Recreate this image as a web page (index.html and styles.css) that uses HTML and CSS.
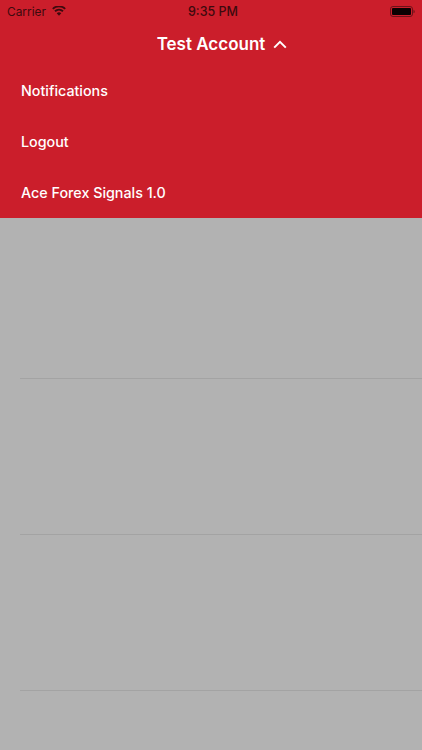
FILE: index.html
```html
<!DOCTYPE html>
<html lang="en">
<head>
<meta charset="utf-8">
<title>Test Account</title>
<link rel="stylesheet" href="styles.css">
</head>
<body>
<div class="screen">
  <header class="panel">
    <div class="status">
      <div class="status-left">
        <span>Carrier</span>
        <svg class="wifi" width="14" height="10" viewBox="0 0 15 11"><path d="M7.5 10.8 5 7.9a3.7 3.7 0 0 1 5 0Z" fill="#3d0a0e"/><path d="M3.8 6.6 2.4 5a7.6 7.6 0 0 1 10.2 0l-1.4 1.6a5.5 5.5 0 0 0-7.4 0Z" fill="#3d0a0e"/><path d="M1.3 3.8 0 2.4a11 11 0 0 1 15 0l-1.3 1.4a9.2 9.2 0 0 0-12.4 0Z" fill="#3d0a0e"/></svg>
      </div>
      <div class="status-time">9:35 PM</div>
      <div class="status-right">
        <svg width="25" height="11" viewBox="0 0 25 11"><rect x=".5" y=".5" width="22" height="10" rx="2.5" fill="none" stroke="#6d1219"/><rect x="2" y="2" width="19" height="7" rx="1" fill="#0c0102"/><path d="M23.5 3.7c.8.2 1.2.9 1.2 1.8s-.4 1.6-1.2 1.8Z" fill="#6d1219"/></svg>
      </div>
    </div>
    <div class="title">
      <span>Test Account</span>
      <svg class="chevron" width="14" height="9" viewBox="0 0 14 9"><path d="M1.2 7.6 7 1.8l5.8 5.8" fill="none" stroke="#fff" stroke-width="2"/></svg>
    </div>
    <nav class="menu">
      <div class="menu-item">Notifications</div>
      <div class="menu-item">Logout</div>
      <div class="menu-item">Ace Forex Signals 1.0</div>
    </nav>
  </header>
  <main class="list">
    <div class="row row-first"></div>
    <div class="row"></div>
    <div class="row"></div>
  </main>
</div>
</body>
</html>
```
FILE: styles.css
```css
* { box-sizing: border-box; }
html, body { margin: 0; padding: 0; }
body { font-family: Inter, "Liberation Sans", sans-serif; }
.screen { width: 422px; height: 750px; overflow: hidden; background: #b2b2b2; display: flex; flex-direction: column; }
.panel { height: 218px; background: #cb1e2b; color: #fff; flex: none; }
.status { height: 23px; padding: 0 7px; display: flex; align-items: center; justify-content: space-between; position: relative; color: #3d0a0e; font-size: 11.9px; font-weight: 400; }
.status-left { display: flex; align-items: center; gap: 6.5px; }
.status-time { position: absolute; left: 4px; right: 0; text-align: center; font-weight: 500; font-size: 12.5px; }
.status-right { display: flex; }
.wifi { margin-top: -2px; }
.title { height: 42px; padding-left: 22px; display: flex; align-items: center; justify-content: center; gap: 8px; font-size: 17px; font-weight: 600; }
.menu { display: flex; flex-direction: column; }
.menu-item { height: 51px; padding-left: 21px; display: flex; align-items: center; font-size: 14.3px; font-weight: 500; }
.list { flex: 1; display: flex; flex-direction: column; }
.row { height: 156px; flex: none; margin-left: 20px; border-bottom: 1px solid #a3a3a3; }
.row-first { height: 161px; }
```
